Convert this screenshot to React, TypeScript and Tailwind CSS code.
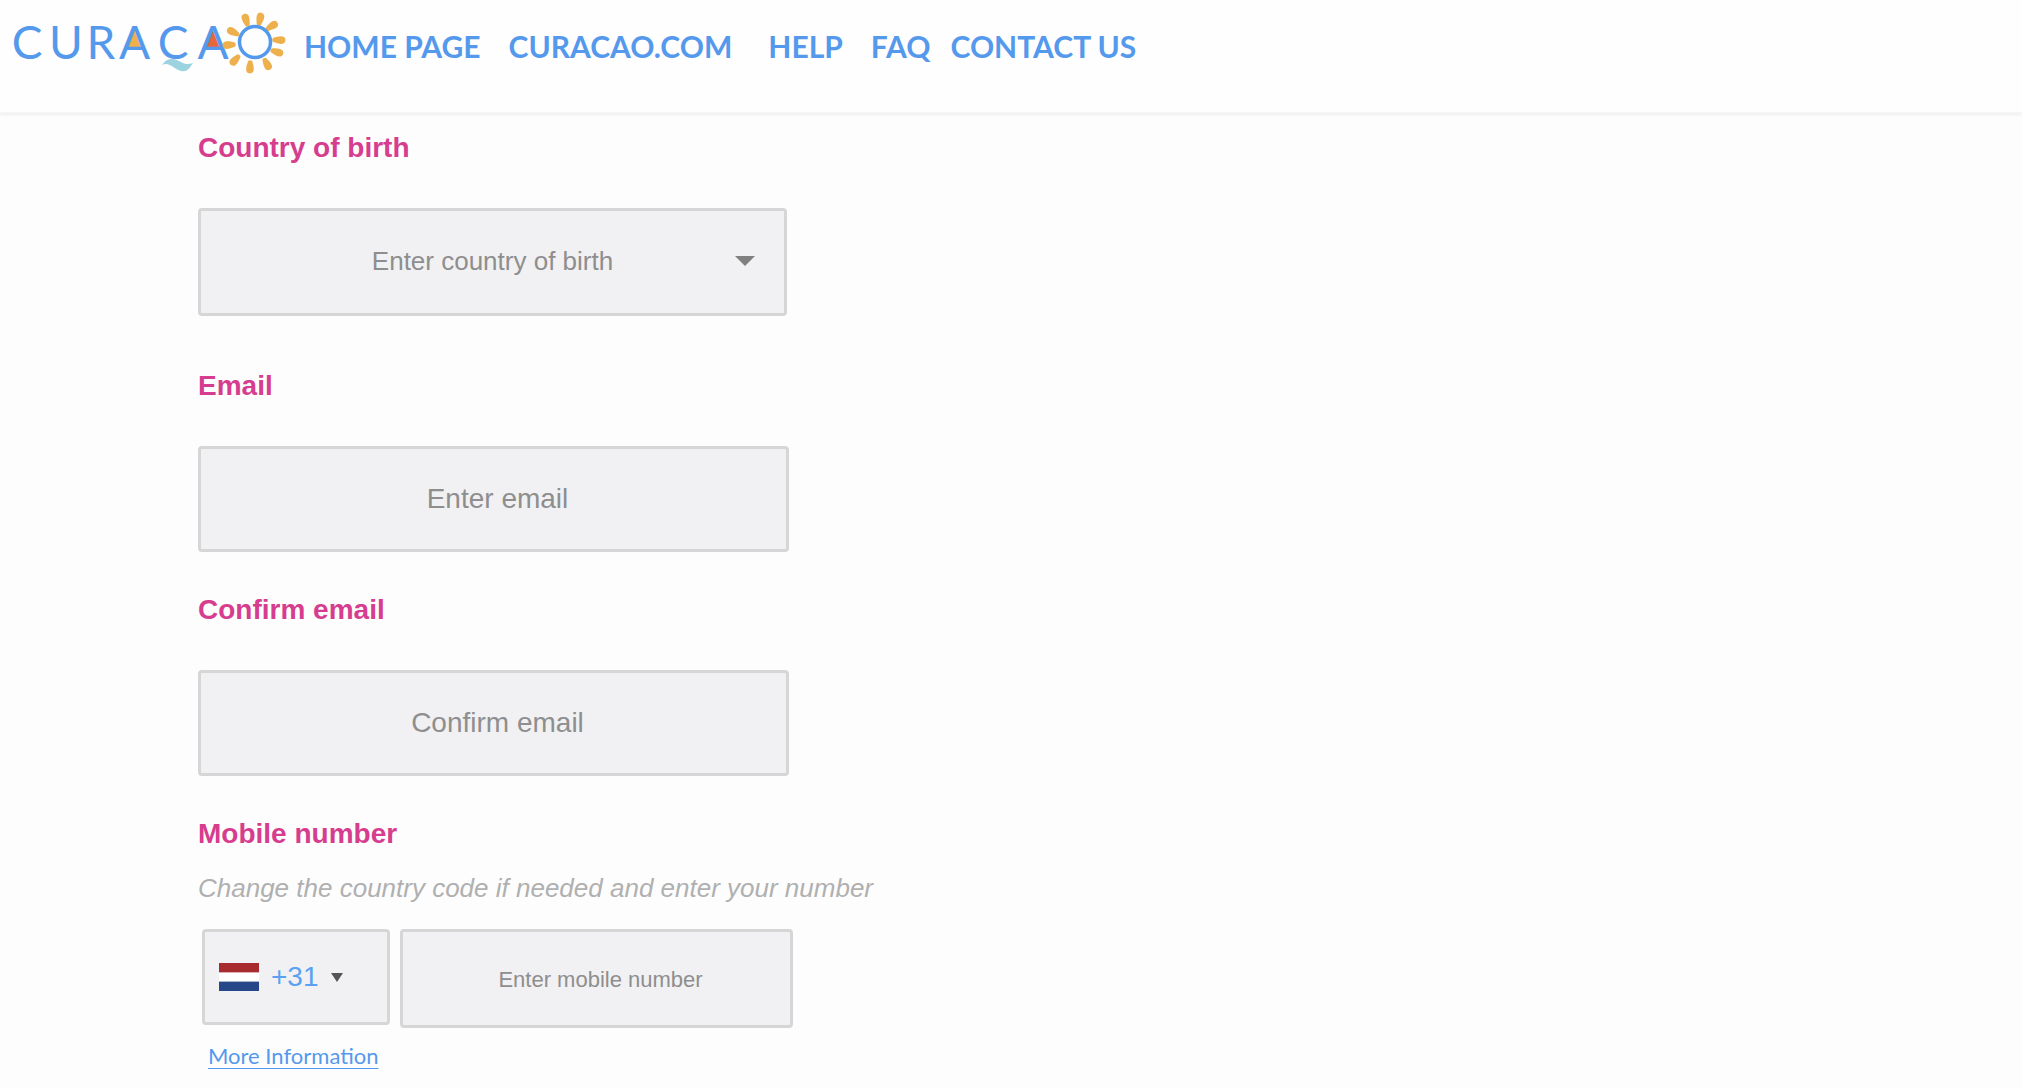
const NAV_LINKS = [
  { label: "HOME PAGE", className: "mr-7" },
  { label: "CURACAO.COM", className: "mr-9" },
  { label: "HELP", className: "mr-7" },
  { label: "FAQ", className: "mr-5" },
  { label: "CONTACT US", className: "" },
];

// x, y, rotation of every sun ray
const RAYS = [
  [246, 20, -16],
  [260, 19, 12],
  [272, 26, 58],
  [279, 40, 92],
  [277, 52, 108],
  [267, 64, 152],
  [250, 67, 182],
  [235, 60, 222],
  [229, 45, 265],
  [233, 32, 297],
];

const labelClass = "block text-[28px] leading-8 font-bold text-[#d63d8e]";
const fieldClass =
  "rounded-sm border-3 border-[#d6d6d6] bg-[#f1f1f3] text-center text-[#8e8e8e] outline-none placeholder:text-[#8e8e8e] placeholder:opacity-100";

function Logo() {
  return (
    <svg viewBox="0 0 288 80" className="h-20 w-72 shrink-0" role="img" aria-label="Curaçao">
      <path d="M128 47 L134.500 30 L141 47Z" fill="#eeb04c" />
      <path d="M206.500 47 L213 30 L219.500 47Z" fill="#e5673b" />
      <text
        x="27 66 101 134.5 173 213"
        y="59"
        textAnchor="middle"
        fill="#5599ed"
        className="font-['Lato',sans-serif] text-[46px]"
      >
        CURACA
      </text>
      <path
        d="M162 65 C168 56 176 59 181 62 C186 65 189 64 193 63 C189 69 187 72 181 71 C174 69 169 61 162 65Z"
        fill="#9bd3e0"
      />
      {RAYS.map(([x, y, angle]) => (
        <path
          key={angle}
          d="M-2 6 C-4 0 -5.500 -6 0 -6.500 C5.500 -6 4 0 2 6 C1 7 -1 7 -2 6Z"
          transform={`translate(${x} ${y}) rotate(${angle})`}
          fill="#eeb04c"
        />
      ))}
      <circle cx="255" cy="42" r="15.500" fill="none" stroke="#5599ed" strokeWidth="3.500" />
    </svg>
  );
}

function Flag() {
  return (
    <svg viewBox="0 0 40 28" className="h-7 w-10 shrink-0" aria-hidden="true">
      <rect width="40" height="28" fill="#fff" />
      <rect width="40" height="9" fill="#a72b2f" />
      <rect y="9" width="40" height="1" fill="#dcb0b2" />
      <rect y="18" width="40" height="1" fill="#a9b6d0" />
      <rect y="19" width="40" height="9" fill="#274888" />
    </svg>
  );
}

export default function App() {
  return (
    <div className="min-h-screen bg-[#fdfdfd] font-['Liberation_Sans',Arial,sans-serif]">
      <header className="flex h-[114px] items-start border-b-2 border-[#f5f5f5] bg-[#fefefe] shadow-sm shadow-black/5">
        <Logo />
        <nav className="flex pt-[30px] pl-4 font-['Lato',sans-serif] text-[30px] leading-8 font-bold text-[#5599ed]">
          {NAV_LINKS.map((link) => (
            <a key={link.label} href="#" className={`whitespace-nowrap ${link.className}`}>
              {link.label}
            </a>
          ))}
        </nav>
      </header>

      <form className="pt-[18px] pb-3 pl-[198px]">
        <div className="mb-[54px]">
          <label htmlFor="country" className={labelClass}>
            Country of birth
          </label>
          <div className="relative mt-11 w-[589px] max-w-full">
            <select
              id="country"
              className={`${fieldClass} block h-[108px] w-full appearance-none pb-0.5 text-[26px]`}
            >
              <option>Enter country of birth</option>
            </select>
            <svg
              viewBox="0 0 20 10"
              className="pointer-events-none absolute top-12 right-8 h-[10px] w-5"
              aria-hidden="true"
            >
              <path d="M0 0H20L10 10Z" fill="#808080" />
            </svg>
          </div>
        </div>

        <div className="mb-[42px]">
          <label htmlFor="email" className={labelClass}>
            Email
          </label>
          <input
            id="email"
            type="email"
            placeholder="Enter email"
            className={`${fieldClass} mt-11 block h-[106px] w-[591px] max-w-full pl-2 text-[28px]`}
          />
        </div>

        <div className="mb-[42px]">
          <label htmlFor="confirm" className={labelClass}>
            Confirm email
          </label>
          <input
            id="confirm"
            type="email"
            placeholder="Confirm email"
            className={`${fieldClass} mt-11 block h-[106px] w-[591px] max-w-full pl-2 text-[28px]`}
          />
        </div>

        <label htmlFor="mobile" className={labelClass}>
          Mobile number
        </label>
        <p className="mt-[22px] mb-[25px] text-[26px] leading-8 text-[#b0b0b0] italic">
          Change the country code if needed and enter your number
        </p>
        <div className="flex items-start gap-[10px] pl-1">
          <div className="flex h-24 w-[188px] items-center rounded-sm border-3 border-[#d6d6d6] bg-[#f1f1f3] pl-[14px]">
            <Flag />
            <select
              aria-label="Country code"
              className="ml-3 w-[50px] appearance-none text-[28px] text-[#5ba1f2] outline-none"
            >
              <option>+31</option>
            </select>
            <svg viewBox="0 0 12 9" className="ml-[10px] h-[9px] w-3" aria-hidden="true">
              <path d="M0 0H12L6 9Z" fill="#555" />
            </svg>
          </div>
          <input
            id="mobile"
            type="tel"
            placeholder="Enter mobile number"
            className={`${fieldClass} h-[99px] w-[393px] pt-0.5 pl-2 text-[22px]`}
          />
        </div>
        <a
          href="#"
          className="mt-3 ml-[10px] inline-block font-['Lato',sans-serif] text-[22px] leading-8 text-[#5599ed] underline decoration-1 underline-offset-4"
        >
          More Information
        </a>
      </form>
    </div>
  );
}
